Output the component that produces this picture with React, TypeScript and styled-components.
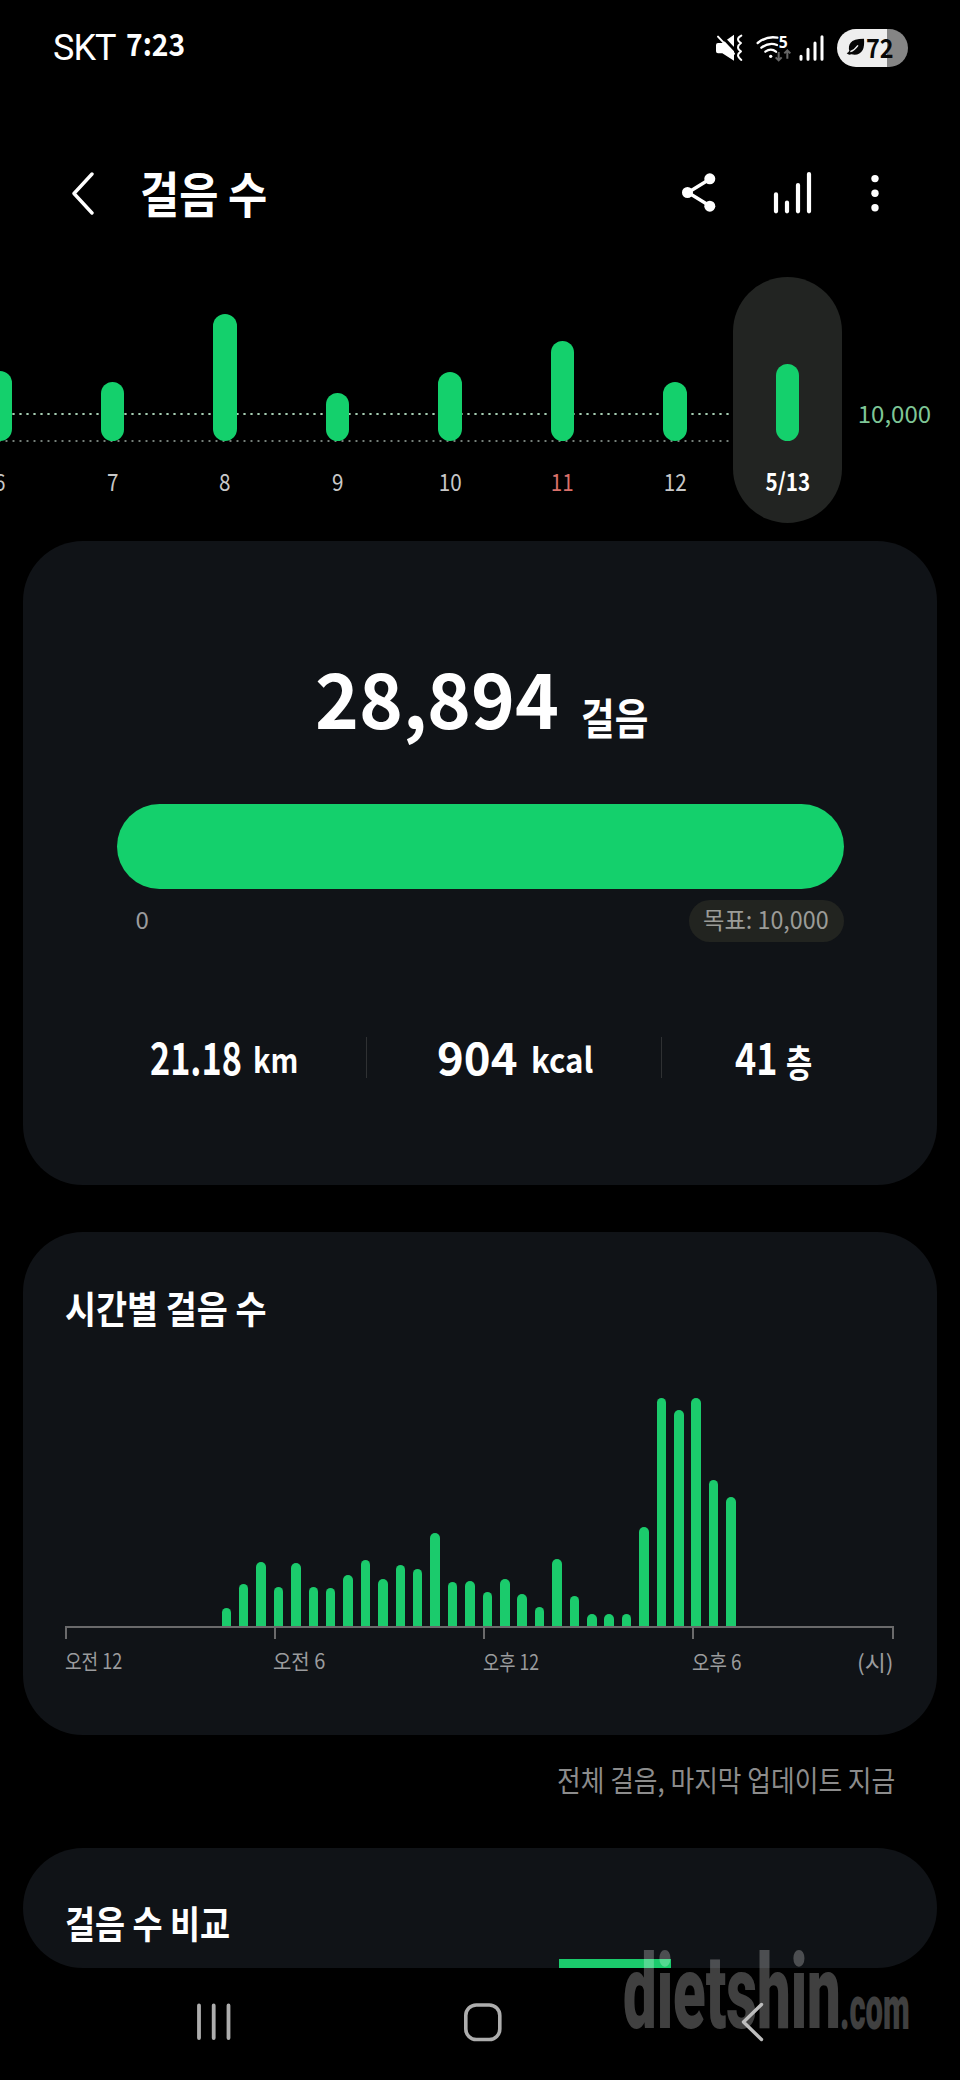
import React from "react";
import styled, { createGlobalStyle } from "styled-components";

const GREEN = "#14d06c";
const CARD = "#101317";

const GlobalStyle = createGlobalStyle`
  * { box-sizing: border-box; }
  body {
    margin: 0;
    background: #000;
    font-family: "Noto Sans CJK KR", "Noto Sans", sans-serif;
  }
`;

const Screen = styled.div`
  position: relative;
  display: flex;
  flex-direction: column;
  width: 960px;
  height: 2080px;
  overflow: hidden;
  background: #000;
  color: #fff;
`;

/* One line of text; $fit condenses or widens the glyphs horizontally. */
const Label = styled.span<{
  $size: number;
  $weight?: number;
  $color?: string;
  $fit?: number;
  $origin?: string;
}>`
  display: inline-block;
  flex: none;
  font-size: ${(p) => p.$size}px;
  font-weight: ${(p) => p.$weight ?? 400};
  line-height: 1;
  color: ${(p) => p.$color ?? "#fff"};
  white-space: nowrap;
  transform: scaleX(${(p) => p.$fit ?? 1});
  transform-origin: ${(p) => p.$origin ?? "left"} center;
`;

const StatusBar = styled.header`
  display: flex;
  align-items: flex-start;
  height: 96px;
  padding: 29px 52px 0 53px;
`;

const Carrier = styled.div`
  width: 73px;
  padding-top: 1px;
  font: 400 36px/36px "Roboto", sans-serif;
  letter-spacing: -1px;
`;

const Clock = styled.div`
  flex: 1;
  margin-top: -2px;
`;

const StatusIcons = styled.div`
  display: flex;
  align-items: flex-start;
`;

const StatusGlyph = styled.svg<{ $gap: number }>`
  display: block;
  margin: 5px ${(p) => p.$gap}px 0 0;
  overflow: visible;
`;

const Battery = styled.div`
  display: flex;
  align-items: center;
  width: 71px;
  height: 38px;
  padding: 0 0 2px 9px;
  border-radius: 19px;
  background: linear-gradient(90deg, #eee 50px, #858585 50px);
`;

const AppBar = styled.div`
  display: flex;
  align-items: flex-start;
  height: 168px;
  padding: 75px 81px 0 71px;
`;

const BackIcon = styled.svg`
  display: block;
  margin-right: 44px;
`;

const PageTitle = styled.h1`
  flex: 1;
  margin: -4px 0 0;
  font-size: 0;
`;

const ActionIcon = styled.svg<{ $gap: number }>`
  display: block;
  margin-right: ${(p) => p.$gap}px;
`;

const Trend = styled.section`
  display: flex;
  height: 277px;
  padding-top: 13px;
  background-image: radial-gradient(circle, #a5cdb2 0.9px, transparent 1.5px),
    radial-gradient(circle, #76807a 0.8px, transparent 1.4px);
  background-size: 7px 4px, 7px 4px;
  background-position: 3px 148px, 3px 175px;
  background-repeat: repeat-x;
`;

const TrendDays = styled.div`
  display: grid;
  grid-template-columns: repeat(8, 112.5px);
  justify-items: center;
  margin-left: -56.25px;
`;

const TrendDay = styled.div<{ $selected?: boolean }>`
  display: flex;
  flex-direction: column;
  align-items: center;
  justify-content: flex-end;
  width: 109px;
  height: 246px;
  padding-bottom: 30px;
  border-radius: 54.5px;
  background: ${(p) => (p.$selected ? "#222422" : "transparent")};
`;

const TrendBar = styled.div`
  width: 23.5px;
  margin-bottom: 28px;
  border-radius: 12px;
  background: ${GREEN};
`;

const TrendScale = styled.div`
  flex: 1;
  height: 200px;
  padding: 124px 0 0 14px;
  background: #000;
`;

const Card = styled.section<{ $height: number }>`
  flex: none;
  height: ${(p) => p.$height}px;
  margin: 0 23px;
  border-radius: 60px;
  background: ${CARD};
  overflow: hidden;
`;

const SummaryCard = styled(Card)`
  padding: 117px 93.5px 0;
  margin-bottom: 47px;
`;

const Total = styled.div`
  display: flex;
  height: 146px;
  padding-left: 198px;
`;

const TotalValue = styled.div`
  width: 266px;
`;

const TotalUnit = styled.div`
  padding-top: 37px;
`;

const GoalBar = styled.div`
  height: 85px;
  border-radius: 42.5px;
  background: ${GREEN};
`;

const GoalRow = styled.div`
  display: flex;
  justify-content: space-between;
  align-items: center;
  height: 42px;
  margin-top: 11px;
  padding-left: 19px;
`;

const GoalStart = styled.div`
  padding-bottom: 4px;
  font-size: 0;
`;

const GoalChip = styled.div`
  display: flex;
  align-items: center;
  width: 155px;
  height: 42px;
  padding: 0 0 4px 14px;
  border-radius: 21px;
  background: #222420;
`;

const Stats = styled.div`
  display: flex;
  margin-top: 95px;
`;

const Stat = styled.div<{ $width: number; $pad: number; $divided?: boolean }>`
  display: flex;
  align-items: flex-start;
  width: ${(p) => p.$width}px;
  height: 41px;
  padding-left: ${(p) => p.$pad}px;
  border-right: ${(p) => (p.$divided ? "1px solid #2f3133" : "none")};
`;

const StatValue = styled.div<{ $width: number }>`
  width: ${(p) => p.$width}px;
  margin-top: -4px;
`;

const StatUnit = styled.div<{ $drop: number }>`
  margin-top: ${(p) => p.$drop}px;
`;

const HourlyCard = styled(Card)`
  padding: 56px 42px 0;
`;

const CardTitle = styled.h2`
  height: 40px;
  margin: 0;
  font-size: 0;
`;

const HourlyPlot = styled.div`
  display: flex;
  align-items: flex-end;
  height: 298px;
  padding-left: 156.5px;
  gap: 7.91px;
`;

const HourBar = styled.div`
  flex: none;
  width: 9.5px;
  border-radius: 5px 5px 0 0;
  background: #1bcb6c;
`;

const Axis = styled.div`
  display: flex;
  height: 12.5px;
  margin-right: 1.5px;
  border: solid #6a6a6b;
  border-width: 2px 2px 0;
`;

const AxisTick = styled.i`
  width: 209px;
  border-right: 2px solid #6a6a6b;
`;

const AxisLabels = styled.div`
  display: flex;
  padding-top: 11px;
`;

const AxisLabel = styled.div<{ $width: number; $drop?: number }>`
  width: ${(p) => p.$width}px;
  padding-top: ${(p) => p.$drop ?? 0}px;
  font-size: 0;
`;

const UpdateNote = styled.div`
  display: flex;
  height: 113px;
  padding: 30px 0 0 557px;
`;

const CompareCard = styled(Card)`
  display: flex;
  flex-direction: column;
  justify-content: space-between;
  padding: 55px 42px 0;
`;

const ComparePeek = styled.div`
  width: 112px;
  height: 9px;
  margin-left: 494px;
  background: #1bcb6c;
`;

const NavBar = styled.nav`
  display: flex;
  align-items: flex-start;
  height: 112px;
  padding: 34px 0 0 196px;
`;

const NavIcon = styled.svg<{ $gap: number }>`
  position: relative;
  z-index: 1;
  display: block;
  margin-right: ${(p) => p.$gap}px;
`;

const Watermark = styled.div`
  position: absolute;
  left: 623px;
  top: 1943px;
  width: 292px;
  height: 100px;
  opacity: 0.25;
  font-family: "Roboto", sans-serif;
  font-weight: 900;
`;

const WatermarkName = styled.span`
  position: absolute;
  left: 0;
  bottom: 0;
  font-size: 104px;
  line-height: 100px;
  transform: scaleX(0.575);
  transform-origin: left;
`;

const WatermarkDomain = styled.span`
  position: absolute;
  left: 217px;
  bottom: 0;
  font-size: 62px;
  line-height: 70px;
  transform: scaleX(0.5);
  transform-origin: left;
`;

const days = [
  { label: "6", height: 70 },
  { label: "7", height: 59 },
  { label: "8", height: 127 },
  { label: "9", height: 48 },
  { label: "10", height: 69 },
  { label: "11", height: 100, color: "#d9706a" },
  { label: "12", height: 59 },
  { label: "5/13", height: 77, selected: true },
];

const hourly = [
  18.5, 42, 64, 39.5, 63, 39.5, 38, 51, 66, 47, 61.5, 57.5, 93, 44, 45, 34, 47,
  32, 19.5, 67, 30, 12, 12, 12, 99, 228, 216, 228, 146.5, 129,
];

export default function App() {
  return (
    <>
      <GlobalStyle />
      <Screen>
        <StatusBar>
          <Carrier>SKT</Carrier>
          <Clock>
            <Label $size={31} $weight={700} $fit={0.91}>7:23</Label>
          </Clock>
          <StatusIcons>
            <StatusGlyph $gap={13} width="28" height="28" viewBox="0 0 84 84">
              <path fill="#fff" d="M3 33q0-6 6-6h13L57 2v78L22 58H9q-6 0-6-6z" />
              <path stroke="#000" strokeWidth="9" d="M14 0 66 55" />
              <path stroke="#fff" strokeWidth="6" strokeLinecap="round" d="M9 8 57 59" />
              <path
                fill="none"
                stroke="#fff"
                strokeWidth="6"
                strokeLinecap="round"
                strokeLinejoin="round"
                d="M79 5q-10 5-10 11t9 11q-9 6-9 13t9 12q-9 6-9 12t10 14"
              />
            </StatusGlyph>
            <StatusGlyph $gap={8} width="35" height="28" viewBox="0 0 105 84">
              <g fill="none" stroke="#fff" strokeWidth="7" strokeLinecap="round">
                <path d="M5 27Q32 5 64 11" />
                <path d="M16 41q24-18 47-8" />
                <path d="M28 53q17-12 32 0" />
              </g>
              <circle cx="44" cy="67" r="5" fill="#fff" />
              <text x="68" y="42" fontFamily="Noto Sans" fontSize="47" fontWeight="700" fill="#fff">5</text>
              <g fill="none" stroke="#666" strokeWidth="6">
                <path d="M68 54v25M59 70l9 9 9-9" />
                <path d="M94 74V49M85 58l9-9 9 9" />
              </g>
            </StatusGlyph>
            <StatusGlyph $gap={13} width="25" height="28" viewBox="0 0 75 84">
              <path
                stroke="#fff"
                strokeWidth="9"
                strokeLinecap="round"
                d="M6 67v9M27 46v30M48 27v49M69 8v68"
              />
            </StatusGlyph>
            <Battery>
              <svg width="20" height="18" viewBox="0 0 60 54">
                <path d="M2 46q6 6 14 3Q40 54 50 36 56 25 54 2 22 2 14 14 6 24 10 38 8 43 2 46Z" fill="#050505" />
                <path d="M13 41Q25 37 36 22" stroke="#eee" strokeWidth="4" fill="none" />
              </svg>
              <Label $size={26} $weight={700} $color="#080808" $fit={0.9}>72</Label>
            </Battery>
          </StatusIcons>
        </StatusBar>

        <AppBar>
          <BackIcon width="25" height="44" viewBox="0 0 25 44">
            <path d="M21 3 3 22.5 21 42" fill="none" stroke="#fff" strokeWidth="3.4" strokeLinecap="round" strokeLinejoin="round" />
          </BackIcon>
          <PageTitle>
            <Label $size={49} $weight={700} $fit={0.87}>걸음 수</Label>
          </PageTitle>
          <ActionIcon $gap={56} width="36" height="44" viewBox="0 0 36 44">
            <path d="M29 8 7 21.5 29 35" fill="none" stroke="#fff" strokeWidth="3.4" />
            <circle cx="6.5" cy="21.5" r="5.5" fill="#fff" />
            <circle cx="28.8" cy="7.8" r="5.5" fill="#fff" />
            <circle cx="28.8" cy="35.2" r="5.5" fill="#fff" />
          </ActionIcon>
          <ActionIcon $gap={58} width="40" height="44" viewBox="0 0 40 44">
            <path d="M3 23.300v17M14 31.500v8.800M25 14v26.300M36 3v37.300" stroke="#fff" strokeWidth="4.200" strokeLinecap="round" />
          </ActionIcon>
          <ActionIcon $gap={0} width="8" height="44" viewBox="0 0 8 44">
            <circle cx="4" cy="7.600" r="3.700" fill="#fff" />
            <circle cx="4" cy="22.200" r="3.700" fill="#fff" />
            <circle cx="4" cy="36.800" r="3.700" fill="#fff" />
          </ActionIcon>
        </AppBar>

        <Trend>
          <TrendDays>
            {days.map((d) => (
              <TrendDay key={d.label} $selected={d.selected}>
                <TrendBar style={{ height: d.height }} />
                <Label
                  $size={24}
                  $weight={d.selected ? 700 : 400}
                  $color={d.color ?? (d.selected ? "#fff" : "#c8c8c8")}
                  $fit={0.86}
                  $origin="center"
                >
                  {d.label}
                </Label>
              </TrendDay>
            ))}
          </TrendDays>
          <TrendScale>
            <Label $size={24} $color="#7fc797" $fit={1}>10,000</Label>
          </TrendScale>
        </Trend>

        <SummaryCard $height={644}>
          <Total>
            <TotalValue>
              <Label $size={76} $weight={700} $fit={0.98}>28,894</Label>
            </TotalValue>
            <TotalUnit>
              <Label $size={43} $weight={700} $fit={0.85}>걸음</Label>
            </TotalUnit>
          </Total>
          <GoalBar />
          <GoalRow>
            <GoalStart>
              <Label $size={24} $color="#9b9c9e">0</Label>
            </GoalStart>
            <GoalChip>
              <Label $size={24} $color="#9b9c98" $fit={0.97}>목표: 10,000</Label>
            </GoalChip>
          </GoalRow>
          <Stats>
            <Stat $width={250} $pad={33} $divided>
              <StatValue $width={103}>
                <Label $size={45} $weight={700} $fit={0.76}>21.18</Label>
              </StatValue>
              <StatUnit $drop={5}>
                <Label $size={34} $weight={700} $fit={0.85}>km</Label>
              </StatUnit>
            </Stat>
            <Stat $width={295} $pad={70} $divided>
              <StatValue $width={94}>
                <Label $size={45} $weight={700} $fit={1.01}>904</Label>
              </StatValue>
              <StatUnit $drop={5}>
                <Label $size={34} $weight={700} $fit={0.92}>kcal</Label>
              </StatUnit>
            </Stat>
            <Stat $width={170} $pad={73}>
              <StatValue $width={51}>
                <Label $size={45} $weight={700} $fit={0.8}>41</Label>
              </StatValue>
              <StatUnit $drop={5}>
                <Label $size={38} $weight={700} $fit={0.75}>층</Label>
              </StatUnit>
            </Stat>
          </Stats>
        </SummaryCard>

        <HourlyCard $height={503}>
          <CardTitle>
            <Label $size={38} $weight={700} $fit={0.888}>시간별 걸음 수</Label>
          </CardTitle>
          <HourlyPlot>
            {hourly.map((height, i) => (
              <HourBar key={i} style={{ height }} />
            ))}
          </HourlyPlot>
          <Axis>
            <AxisTick />
            <AxisTick />
            <AxisTick />
          </Axis>
          <AxisLabels>
            <AxisLabel $width={208}>
              <Label $size={21} $color="#9b9c9e" $fit={0.86}>오전 12</Label>
            </AxisLabel>
            <AxisLabel $width={210}>
              <Label $size={21} $color="#9b9c9e" $fit={0.95}>오전 6</Label>
            </AxisLabel>
            <AxisLabel $width={209} $drop={1}>
              <Label $size={21} $color="#9b9c9e" $fit={0.84}>오후 12</Label>
            </AxisLabel>
            <AxisLabel $width={165} $drop={1}>
              <Label $size={21} $color="#9b9c9e" $fit={0.9}>오후 6</Label>
            </AxisLabel>
            <AxisLabel $width={38}>
              <Label $size={22} $color="#9b9c9e" $fit={1.04}>(시)</Label>
            </AxisLabel>
          </AxisLabels>
        </HourlyCard>

        <UpdateNote>
          <Label $size={29} $color="#8c8c8c" $fit={0.888}>전체 걸음, 마지막 업데이트 지금</Label>
        </UpdateNote>

        <CompareCard $height={120}>
          <CardTitle>
            <Label $size={38} $weight={700} $fit={0.86}>걸음 수 비교</Label>
          </CardTitle>
          <ComparePeek />
        </CompareCard>

        <NavBar>
          <NavIcon $gap={231} width="36" height="40" viewBox="0 0 36 40">
            <path d="M3 3.500v32.500M17.700 3.500v32.500M32.500 3.500v32.500" stroke="#adadad" strokeWidth="3.800" strokeLinecap="round" />
          </NavIcon>
          <NavIcon $gap={236} width="40" height="40" viewBox="0 0 40 40">
            <rect x="2.800" y="3" width="34" height="34.500" rx="10.500" fill="none" stroke="#adadad" strokeWidth="3.600" />
          </NavIcon>
          <NavIcon $gap={0} width="26" height="40" viewBox="0 0 26 40">
            <path d="M22.500 2.500 4.500 20l18 17.500" fill="none" stroke="#bdbdbd" strokeWidth="3.400" strokeLinecap="round" strokeLinejoin="round" />
          </NavIcon>
        </NavBar>

        <Watermark>
          <WatermarkName>dietshin</WatermarkName>
          <WatermarkDomain>.com</WatermarkDomain>
        </Watermark>
      </Screen>
    </>
  );
}
